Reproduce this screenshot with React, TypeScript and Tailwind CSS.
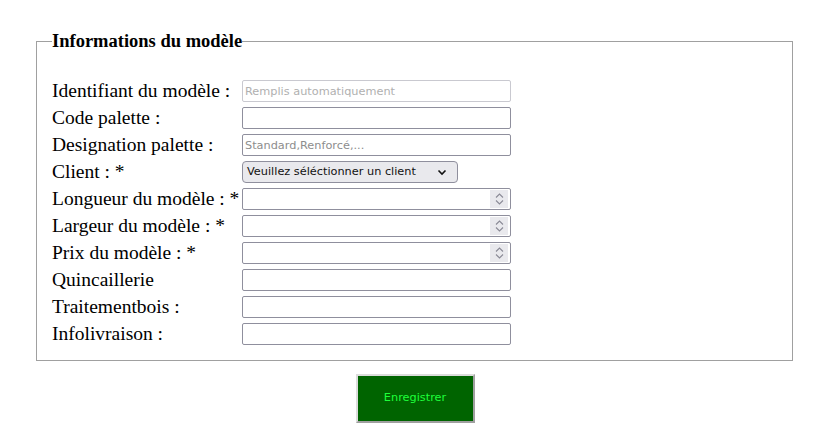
import React from "react";

type Row = {
  label: string;
  kind: "text" | "number" | "select" | "auto";
  placeholder?: string;
};

const rows: Row[] = [
  { label: "Identifiant du modèle :", kind: "auto", placeholder: "Remplis automatiquement" },
  { label: "Code palette :", kind: "text" },
  { label: "Designation palette :", kind: "text", placeholder: "Standard,Renforcé,..." },
  { label: "Client : *", kind: "select" },
  { label: "Longueur du modèle : *", kind: "number" },
  { label: "Largeur du modèle : *", kind: "number" },
  { label: "Prix du modèle : *", kind: "number" },
  { label: "Quincaillerie", kind: "text" },
  { label: "Traitementbois :", kind: "text" },
  { label: "Infolivraison :", kind: "text" },
];

const inputFont = "font-['DejaVu_Sans',sans-serif] text-[11.3px]";

const Spinner: React.FC = () => (
  <div className="w-[18px] h-[18px] bg-[#e9e9ed] flex flex-col items-center justify-center gap-[2px] mr-[2px]">
    <svg width="9" height="5" viewBox="0 0 9 5">
      <path d="M1 4.5 L4.5 1 L8 4.5" fill="none" stroke="#8a8a96" strokeWidth="1.1" />
    </svg>
    <svg width="9" height="5" viewBox="0 0 9 5">
      <path d="M1 0.5 L4.5 4 L8 0.5" fill="none" stroke="#8a8a96" strokeWidth="1.1" />
    </svg>
  </div>
);

const Field: React.FC<{ row: Row }> = ({ row }) => {
  if (row.kind === "select") {
    return (
      <div className={`w-[216px] h-[22px] rounded-[4px] border border-[#8f8f9d] bg-[#e9e9ed] flex items-center justify-between pl-[4px] pr-[10px] ${inputFont} text-[#111]`}>
        <span>Veuillez séléctionner un client</span>
        <svg width="10" height="7" viewBox="0 0 10 7">
          <path d="M1.5 1.5 L5 5 L8.5 1.5" fill="none" stroke="#111" strokeWidth="1.6" />
        </svg>
      </div>
    );
  }
  const border = row.kind === "auto" ? "border-[#c9c9d0]" : "border-[#8f8f9d]";
  return (
    <div className={`w-[269px] h-[22px] rounded-[2px] border ${border} bg-white flex items-center`}>
      <input
        type="text"
        readOnly={row.kind === "auto"}
        placeholder={row.placeholder}
        className={`flex-1 min-w-0 h-full px-[2px] outline-none bg-transparent ${inputFont} ${row.kind === "auto" ? "placeholder:text-[#b0b0b0]" : "placeholder:text-[#8d8d8d]"}`}
      />
      {row.kind === "number" && <Spinner />}
    </div>
  );
};

const App: React.FC = () => {
  return (
    <div className="bg-white min-h-[430px] w-[833px] pt-[30px]">
      <form>
        <fieldset className="ml-[36px] w-[757px] border border-[#a0a0a0] px-[15px] pb-[10px] pt-0">
          <legend className="font-['Liberation_Serif',serif] font-bold text-[18.5px] text-black leading-[22px]">
            Informations du modèle
          </legend>
          <div className="mt-[28px] grid grid-cols-[190px_1fr] auto-rows-[27px]">
            {rows.map((row) => (
              <React.Fragment key={row.label}>
                <label className="font-['Liberation_Serif',serif] text-[19.5px] text-black leading-[22px] self-start whitespace-nowrap">
                  {row.label}
                </label>
                <div className="self-start">
                  <Field row={row} />
                </div>
              </React.Fragment>
            ))}
          </div>
        </fieldset>
        <div className="flex justify-center mt-[13px] w-[830px]">
          <button
            type="button"
            className={`w-[119px] h-[49px] bg-[#006400] border-2 border-t-[#dcdcdc] border-l-[#dcdcdc] border-r-[#a0a0a0] border-b-[#a0a0a0] text-[#1eff3a] ${inputFont}`}
          >
            Enregistrer
          </button>
        </div>
      </form>
    </div>
  );
};

export default App;
